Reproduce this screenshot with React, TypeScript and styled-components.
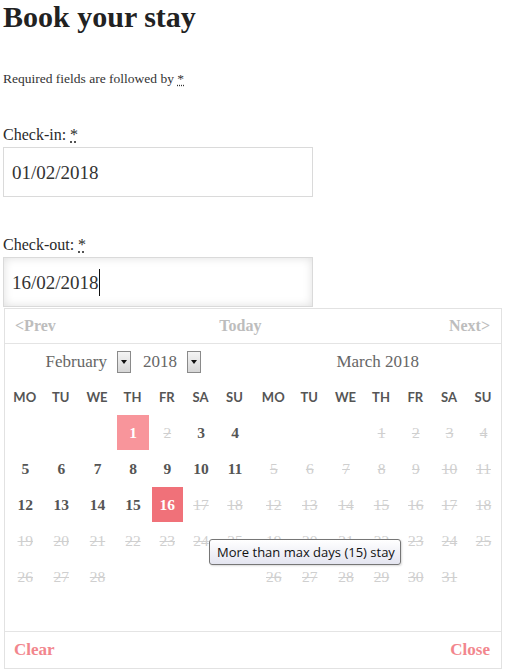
import React from 'react';
import styled, { createGlobalStyle } from 'styled-components';

const GlobalStyle = createGlobalStyle`
  body {
    margin: 0;
    background: #fff;
    font-family: 'Liberation Serif', 'DejaVu Serif', serif;
    color: #333;
  }
`;

const Page = styled.div`
  padding: 0 0 0 3px;
  width: 503px;
  height: 672px;
  overflow: hidden;
`;

const Title = styled.h1`
  margin: 0;
  font-size: 30px;
  line-height: 34px;
  font-weight: 700;
  color: #222;
`;

const Note = styled.p`
  margin: 37px 0 0;
  font-size: 13.5px;
  line-height: 16px;
  color: #333;
`;

const Req = styled.abbr`
  text-decoration: underline dotted;
  text-underline-offset: 2px;
  border: none;
`;

const Label = styled.label<{ $gap: number }>`
  display: block;
  margin: ${(p) => p.$gap}px 0 2px;
  font-size: 16px;
  line-height: 20px;
  color: #2a2a2a;
`;

const Field = styled.div<{ $focused?: boolean }>`
  box-sizing: border-box;
  width: 310px;
  height: 50px;
  padding: 12px 0 0 8px;
  border: 1px solid #dadada;
  background: #fff;
  box-shadow: ${(p) => (p.$focused ? 'inset 0 0 10px rgba(0, 0, 0, 0.13)' : 'none')};
  font-size: 19px;
  line-height: 25px;
  color: #333;
  display: flex;
  align-items: flex-start;
`;

const Caret = styled.span`
  display: inline-block;
  width: 0;
  height: 27px;
  margin-top: -1px;
  border-left: 1px solid #111;
`;

const Picker = styled.div`
  position: relative;
  box-sizing: border-box;
  width: 498px;
  margin: 1px 0 0 1px;
  border: 1px solid #e2e2e2;
  background: #fff;
`;

const NavBar = styled.div`
  display: flex;
  align-items: center;
  justify-content: space-between;
  height: 34px;
  padding: 0 11px 0 10px;
  border-bottom: 1px solid #e4e4e4;
`;

const NavLink = styled.span<{ $shift?: number }>`
  font-size: 16px;
  font-weight: 700;
  color: #bdbdbd;
  margin-right: ${(p) => p.$shift || 0}px;
`;

const Months = styled.div`
  display: grid;
  grid-template-columns: 244.5px 244.5px;
  column-gap: 4px;
  padding-left: 2px;
`;

const MonthTitle = styled.div`
  height: 35px;
  display: flex;
  align-items: center;
  justify-content: center;
  font-size: 17px;
  color: #666;
`;

const Drop = styled.span`
  box-sizing: border-box;
  width: 14px;
  height: 22px;
  margin: 0 12px 0 10px;
  border: 1px solid #8a8a8a;
  background: linear-gradient(#f4f4f4, #d6d6d6);
  display: flex;
  align-items: center;
  justify-content: center;
  &::after {
    content: '';
    border-left: 3px solid transparent;
    border-right: 3px solid transparent;
    border-top: 4px solid #111;
  }
`;

const DayGrid = styled.div`
  display: grid;
  grid-template-columns: 35.5px 36.5px 36px 35px 33.5px 34px 34px;
  grid-auto-rows: 36px;
  height: 252px;
`;

const Head = styled.div`
  display: flex;
  align-items: center;
  justify-content: center;
  font-family: Lato, 'Open Sans', sans-serif;
  font-size: 13px;
  font-weight: 700;
  color: #555;
`;

type DayState = 'on' | 'off' | 'start' | 'end' | 'none';

const Day = styled.div<{ $state: DayState }>`
  display: flex;
  align-items: center;
  justify-content: center;
  margin: 0 1px 1px 2px;
  font-size: 15.5px;
  font-weight: ${(p) => (p.$state === 'off' ? 400 : 700)};
  color: ${(p) =>
    p.$state === 'off' ? '#cfcfcf' : p.$state === 'on' ? '#555' : '#fff'};
  text-decoration: ${(p) => (p.$state === 'off' ? 'line-through' : 'none')};
  background: ${(p) =>
    p.$state === 'start' ? '#f8959b' : p.$state === 'end' ? '#f07179' : 'transparent'};
`;

const Footer = styled.div`
  display: flex;
  justify-content: space-between;
  align-items: center;
  height: 36px;
  padding: 0 11px 0 9px;
  border-top: 1px solid #e4e4e4;
`;

const FootLink = styled.span`
  font-size: 17px;
  font-weight: 700;
  color: #f2868d;
`;

const Tooltip = styled.div`
  position: absolute;
  left: 204px;
  top: 230px;
  box-sizing: border-box;
  width: 192px;
  height: 26px;
  padding: 0 7px;
  border: 1px solid #767676;
  border-radius: 3px;
  background: linear-gradient(#ffffff, #e4e5f0);
  box-shadow: 1px 1px 2px rgba(0, 0, 0, 0.15);
  display: flex;
  align-items: center;
  font-family: 'Open Sans', 'DejaVu Sans', sans-serif;
  font-size: 13px;
  color: #111;
  white-space: nowrap;
`;

const weekdays = ['MO', 'TU', 'WE', 'TH', 'FR', 'SA', 'SU'];

// both months start on a Thursday
const buildDays = (count: number, stateOf: (d: number) => DayState) => {
  const cells: { day: number | null; state: DayState }[] = [];
  for (let i = 0; i < 3; i++) cells.push({ day: null, state: 'none' });
  for (let d = 1; d <= count; d++) cells.push({ day: d, state: stateOf(d) });
  return cells;
};

const february = buildDays(28, (d) => {
  if (d === 1) return 'start';
  if (d === 16) return 'end';
  if (d >= 3 && d <= 15) return 'on';
  return 'off';
});

const march = buildDays(31, () => 'off');

const MonthView: React.FC<{ cells: { day: number | null; state: DayState }[] }> = ({ cells }) => (
  <DayGrid>
    {weekdays.map((w) => (
      <Head key={w}>{w}</Head>
    ))}
    {cells.map((c, i) => (
      <Day key={i} $state={c.state}>
        {c.day}
      </Day>
    ))}
  </DayGrid>
);

const App: React.FC = () => {
  return (
    <Page>
      <GlobalStyle />
      <Title>Book your stay</Title>
      <Note>
        Required fields are followed by <Req title="required">*</Req>
      </Note>

      <Label $gap={38}>
        Check-in: <Req title="required">*</Req>
      </Label>
      <Field>01/02/2018</Field>

      <Label $gap={38}>
        Check-out: <Req title="required">*</Req>
      </Label>
      <Field $focused>
        16/02/2018
        <Caret />
      </Field>

      <Picker>
        <NavBar>
          <NavLink>&lt;Prev</NavLink>
          <NavLink $shift={24}>Today</NavLink>
          <NavLink>Next&gt;</NavLink>
        </NavBar>
        <Months>
          <div>
            <MonthTitle>
              February
              <Drop />
              2018
              <Drop />
            </MonthTitle>
            <MonthView cells={february} />
          </div>
          <div>
            <MonthTitle>March 2018</MonthTitle>
            <MonthView cells={march} />
          </div>
        </Months>
        <Footer>
          <FootLink>Clear</FootLink>
          <FootLink>Close</FootLink>
        </Footer>
        <Tooltip>More than max days (15) stay</Tooltip>
      </Picker>
    </Page>
  );
};

export default App;
